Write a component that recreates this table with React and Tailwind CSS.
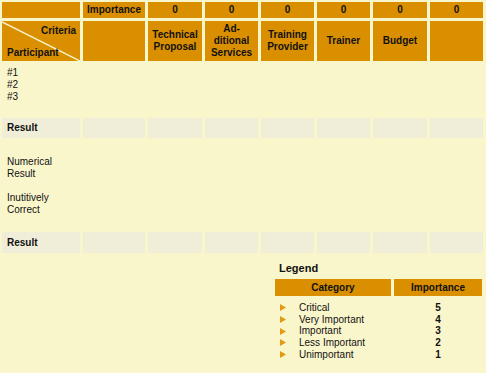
import React from "react";

const COLS = "grid grid-cols-[78px_62px_54px_53px_53px_53px_54px_53px] gap-x-[3px]";

const criteria = [
  ["Technical", "Proposal"],
  ["Ad-", "ditional", "Services"],
  ["Training", "Provider"],
  ["Trainer"],
  ["Budget"],
  [],
];

const legend = [
  ["Critical", 5],
  ["Very Important", 4],
  ["Important", 3],
  ["Less Important", 2],
  ["Unimportant", 1],
];

function ResultRow({ h }) {
  return (
    <div className={`${COLS} ${h}`}>
      <div className="bg-[#f0eed8] flex items-center pl-[5px] font-bold">Result</div>
      {Array.from({ length: 7 }).map((_, i) => (
        <div key={i} className="bg-[#f0eed8]" />
      ))}
    </div>
  );
}

export default function App() {
  return (
    <div className="min-h-[373px] w-[486px] bg-[#faf6cc] text-[10px] leading-[12px] text-[#111] font-['Liberation_Sans',Arial,sans-serif] pt-[2px] pl-[2px]">
      <div className="flex flex-col gap-y-[3px]">
        {/* importance weights */}
        <div className={`${COLS} h-[16px] font-bold`}>
          <div className="bg-[#d98f00]" />
          <div className="bg-[#d98f00] flex items-center justify-center">Importance</div>
          {criteria.map((_, i) => (
            <div key={i} className="bg-[#d98f00] flex items-center justify-center">0</div>
          ))}
        </div>

        {/* criteria header */}
        <div className={`${COLS} h-[40px] font-bold`}>
          <div className="bg-[#d98f00] relative">
            <svg className="absolute inset-0 w-full h-full" viewBox="0 0 78 40" preserveAspectRatio="none">
              <line x1="0" y1="1" x2="78" y2="40" stroke="#faf6cc" strokeWidth="1.4" />
            </svg>
            <div className="absolute right-[4px] top-[4px]">Criteria</div>
            <div className="absolute left-[5px] bottom-[2px]">Participant</div>
          </div>
          <div className="bg-[#d98f00]" />
          {criteria.map((lines, i) => (
            <div key={i} className="bg-[#d98f00] flex flex-col items-center justify-center text-center">
              {lines.map((l) => (
                <span key={l}>{l}</span>
              ))}
            </div>
          ))}
        </div>

        {/* participants */}
        <div className={`${COLS} h-[51px]`}>
          <div className="pl-[5px] pt-[3px] flex flex-col">
            <span>#1</span>
            <span>#2</span>
            <span>#3</span>
          </div>
        </div>

        <ResultRow h="h-[20px]" />

        <div className={`${COLS} h-[88px]`}>
          <div className="pl-[5px] pt-[15px] flex flex-col">
            <span>Numerical</span>
            <span>Result</span>
            <span className="h-[12px]" />
            <span>Inutitively</span>
            <span>Correct</span>
          </div>
        </div>

        <ResultRow h="h-[21px]" />
      </div>

      {/* legend */}
      <div className="ml-[273px] w-[207px] mt-[8px]">
        <div className="pl-[4px] text-[11px] leading-[14px] font-bold">Legend</div>
        <div className="grid grid-cols-[116px_88px] gap-x-[3px] h-[17px] mt-[4px] font-bold">
          <div className="bg-[#d98f00] flex items-center justify-center">Category</div>
          <div className="bg-[#d98f00] flex items-center justify-center">Importance</div>
        </div>
        <div className="mt-[6px] flex flex-col">
          {legend.map(([name, n]) => (
            <div key={name} className="grid grid-cols-[116px_88px] gap-x-[3px] h-[11.7px] leading-[11.7px]">
              <div className="flex items-center">
                <svg className="ml-[5px] w-[6px] h-[7px]" viewBox="0 0 6 7">
                  <polygon points="0,0 6,3.5 0,7" fill="#e39a12" />
                </svg>
                <span className="ml-[13px]">{name}</span>
              </div>
              <div className="text-center font-bold">{n}</div>
            </div>
          ))}
        </div>
      </div>
    </div>
  );
}
